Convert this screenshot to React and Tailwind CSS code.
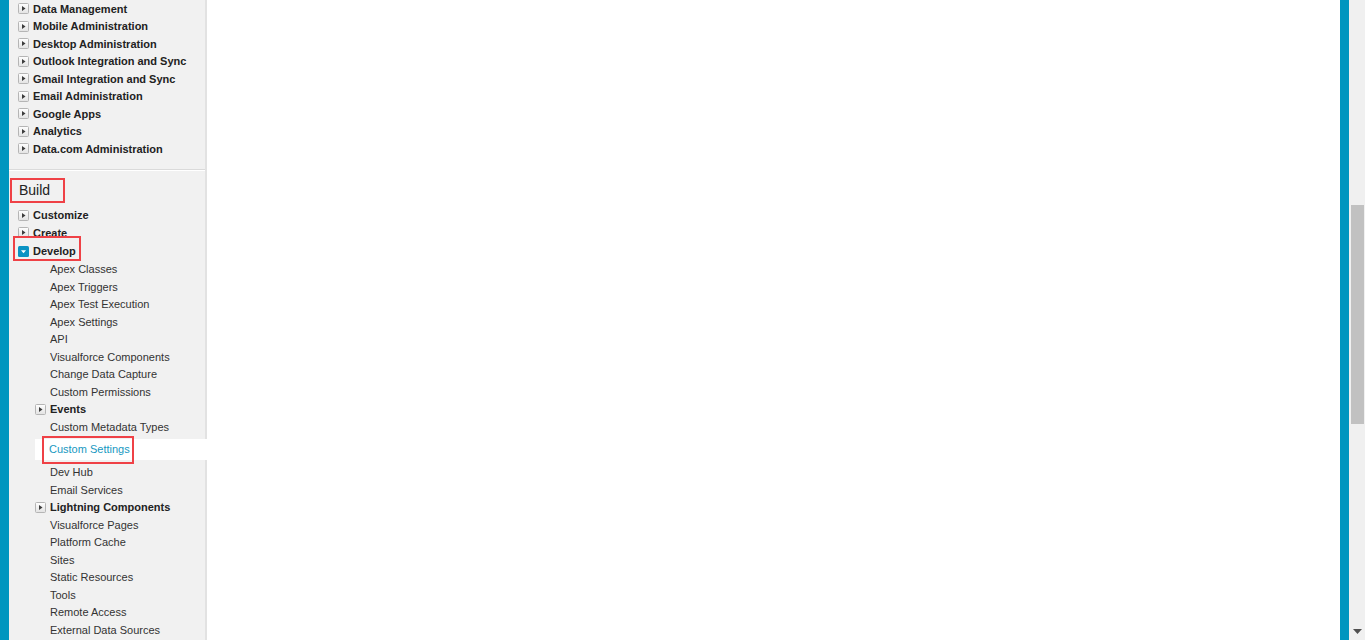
import React from "react";

const topItems = [
  "Data Management",
  "Mobile Administration",
  "Desktop Administration",
  "Outlook Integration and Sync",
  "Gmail Integration and Sync",
  "Email Administration",
  "Google Apps",
  "Analytics",
  "Data.com Administration",
];

const developChildren = [
  { label: "Apex Classes" },
  { label: "Apex Triggers" },
  { label: "Apex Test Execution" },
  { label: "Apex Settings" },
  { label: "API" },
  { label: "Visualforce Components" },
  { label: "Change Data Capture" },
  { label: "Custom Permissions" },
  { label: "Events", folder: true },
  { label: "Custom Metadata Types" },
  { label: "Custom Settings", selected: true },
  { label: "Dev Hub" },
  { label: "Email Services" },
  { label: "Lightning Components", folder: true },
  { label: "Visualforce Pages" },
  { label: "Platform Cache" },
  { label: "Sites" },
  { label: "Static Resources" },
  { label: "Tools" },
  { label: "Remote Access" },
  { label: "External Data Sources" },
];

function ClosedIcon() {
  return (
    <svg width="11" height="11" viewBox="0 0 11 11" className="shrink-0">
      <defs>
        <linearGradient id="cg" x1="0" y1="0" x2="0" y2="1">
          <stop offset="0" stopColor="#ffffff" />
          <stop offset="1" stopColor="#e2e2e2" />
        </linearGradient>
      </defs>
      <rect x="0.5" y="0.5" width="10" height="10" rx="1" fill="url(#cg)" stroke="#b5b5b5" />
      <path d="M4 3 L7.5 5.5 L4 8 Z" fill="#3c3c3c" />
    </svg>
  );
}

function OpenIcon() {
  return (
    <svg width="11" height="11" viewBox="0 0 11 11" className="shrink-0">
      <rect x="0" y="0" width="11" height="11" rx="1.5" fill="#0b93c3" />
      <path d="M3 4.2 L8 4.2 L5.5 7.2 Z" fill="#ffffff" />
    </svg>
  );
}

function FolderRow({ label, indent = "pl-[9px]" }) {
  return (
    <div className={`flex items-center h-[17.5px] gap-[4px] ${indent}`}>
      <ClosedIcon />
      <span className="text-[11px] font-bold text-[#222] whitespace-nowrap">{label}</span>
    </div>
  );
}

export default function App() {
  return (
    <div
      className="flex h-[640px] w-[1365px] overflow-hidden bg-white"
      style={{ fontFamily: '"Liberation Sans", Arial, sans-serif' }}
    >
      {/* left accent */}
      <div className="w-[9px] shrink-0 bg-[#0096bf]" />

      {/* setup sidebar */}
      <div className="w-[198px] shrink-0 bg-[#f1f1f1] border-r-2 border-[#e2e2e2]">
        <div className="pb-[11px] border-b border-[#dadada]">
          {topItems.map((item) => (
            <FolderRow key={item} label={item} />
          ))}
        </div>
        <div className="h-px bg-white" />

        <div className="pt-[7px]">
          <div className="ml-[1px] w-[55px] h-[25px] border-2 border-[#ef4146] flex items-center pl-[7px]">
            <span className="text-[14px] text-[#222]">Build</span>
          </div>
        </div>

        <div className="pt-[4px]">
          <FolderRow label="Customize" />
          <FolderRow label="Create" />
          <div className="relative h-[19px]">
            <div className="absolute left-[4px] top-[-6px] w-[68px] h-[25px] border-2 border-[#ef4146]" />
            <div className="flex items-center h-[19px] gap-[4px] pl-[9px]">
              <OpenIcon />
              <span className="text-[11px] font-bold text-[#222]">Develop</span>
            </div>
          </div>

          <div>
            {developChildren.map((c) =>
              c.folder ? (
                <FolderRow key={c.label} label={c.label} indent="pl-[26px]" />
              ) : c.selected ? (
                <div
                  key={c.label}
                  className="relative ml-[26px] -mr-[2px] mt-[3px] mb-[4px] h-[21px] bg-white flex items-center pl-[14px]"
                >
                  <div className="absolute left-[7px] top-[-3px] w-[92px] h-[28px] border-2 border-[#ef4146]" />
                  <span className="text-[11px] text-[#1798c1]">{c.label}</span>
                </div>
              ) : (
                <div key={c.label} className="flex items-center h-[17.5px] pl-[41px]">
                  <span className="text-[11px] text-[#333]">{c.label}</span>
                </div>
              )
            )}
          </div>
        </div>
      </div>

      {/* main content */}
      <div className="flex-1 bg-white" />

      {/* right accent */}
      <div className="w-[9px] shrink-0 bg-[#0096bf]" />

      {/* scrollbar */}
      <div className="w-[16px] shrink-0 bg-[#f0f0f0] flex flex-col">
        <div className="h-[205px]" />
        <div className="ml-[2px] mr-[1px] h-[219px] bg-[#c1c1c1]" />
        <div className="flex-1" />
        <div className="h-[14px] flex items-start justify-center pt-[3px]">
          <svg width="9" height="5" viewBox="0 0 9 5">
            <path d="M0 0 L9 0 L4.5 5 Z" fill="#505050" />
          </svg>
        </div>
      </div>
    </div>
  );
}
